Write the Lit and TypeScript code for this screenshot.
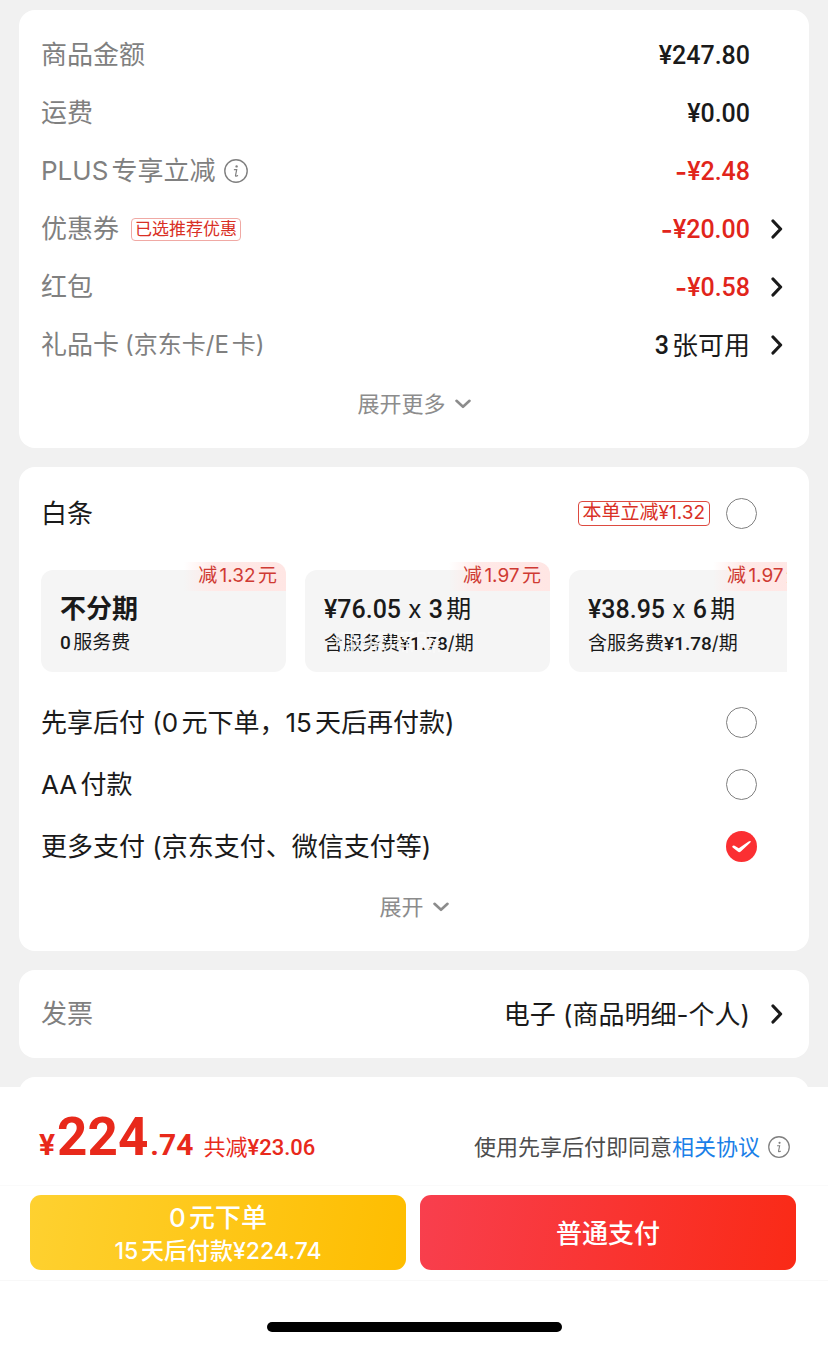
import { LitElement, html, css, svg, nothing } from "lit";
import { customElement, state } from "lit/decorators.js";

interface PriceRow {
  label: string;
  note?: string;
  tag?: string;
  info?: boolean;
  value: string;
  unit?: string;
  discount?: boolean;
  link?: boolean;
}

interface Plan {
  amount?: string;
  times: string;
  feeAmount: string;
  feeBefore?: string;
  feeAfter: string;
  badge: string;
  smudge?: boolean;
}

const PRICE_ROWS: PriceRow[] = [
  { label: "商品金额", value: "¥247.80" },
  { label: "运费", value: "¥0.00" },
  { label: "PLUS专享立减", info: true, value: "¥2.48", discount: true },
  { label: "优惠券", tag: "已选推荐优惠", value: "¥20.00", discount: true, link: true },
  { label: "红包", value: "¥0.58", discount: true, link: true },
  { label: "礼品卡", note: "(京东卡/E卡)", value: "3", unit: "张可用", link: true },
];

const PLANS: Plan[] = [
  { times: "不分期", feeAmount: "0", feeAfter: "服务费", badge: "减1.32元" },
  { amount: "¥76.05", times: "3", feeBefore: "含服务费", feeAmount: "¥1.78", feeAfter: "/期", badge: "减1.97元", smudge: true },
  { amount: "¥38.95", times: "6", feeBefore: "含服务费", feeAmount: "¥1.78", feeAfter: "/期", badge: "减1.97元" },
];

const METHODS = [
  { id: "later", label: "先享后付 (0元下单，15天后再付款)" },
  { id: "aa", label: "AA付款" },
  { id: "more", label: "更多支付 (京东支付、微信支付等)" },
];

const chevronRight = html`<svg class="chev-right" viewBox="0 0 12 20" aria-hidden="true">
  ${svg`<path d="M2 2 L9.6 10 L2 18" fill="none" stroke="currentColor" stroke-width="3.2" stroke-linecap="round" stroke-linejoin="round"/>`}
</svg>`;

const chevronDown = html`<svg class="chev-down" viewBox="0 0 16 10" aria-hidden="true">
  ${svg`<path d="M1.5 1.8 L8 7.8 L14.5 1.8" fill="none" stroke="currentColor" stroke-width="2.6" stroke-linecap="round" stroke-linejoin="round"/>`}
</svg>`;

const infoIcon = html`<svg class="info-icon" viewBox="0 0 24 24" aria-hidden="true">
  ${svg`<circle cx="12" cy="12" r="11.2" fill="none" stroke="currentColor" stroke-width="1.4"/>
  <circle cx="12.6" cy="7.4" r="1.2" fill="currentColor"/>
  <path d="M10.4 10.7 H12.7 L11.5 16.6 Q11.4 17.3 12.1 17.2 L13.6 16.6" fill="none" stroke="currentColor" stroke-width="1.2" stroke-linecap="round"/>`}
</svg>`;

// Broken white strokes of a faded stamp lying over the fee line.
const smudge = html`<svg class="smudge" viewBox="0 0 108 24" aria-hidden="true">
  ${[0, 27, 54, 81].map(
    (x) => svg`<path transform="translate(${x} 0)" d="M2 3 V20 M2 3 H9 M9 3 V19 M3 9 H8 M3 15 H8 M12 3 H25 M18 1 V7 M13 8 L24 12 M24 7 L13 13 M12 16 H25 M18 12 V23 M14 18 V22 M23 18 V22"
      fill="none" stroke="#fafafa" stroke-width="1.4"/>`,
  )}
</svg>`;

@customElement("app-root")
export class AppRoot extends LitElement {
  static styles = css`
    :host {
      display: flex;
      flex-direction: column;
      height: 100vh;
      background: #f1f1f1;
      color: #1a1a1a;
      font-family: Inter, "Noto Sans CJK SC", sans-serif;
      font-size: 26px;
      line-height: 36px;
      text-autospace: normal;
    }
    * {
      box-sizing: border-box;
    }
    button {
      font: inherit;
      color: inherit;
      border: 0;
      padding: 0;
      background: none;
      cursor: pointer;
      text-autospace: inherit;
    }
    .scroll {
      flex: 1;
      min-height: 0;
      overflow-y: auto;
      scrollbar-width: none;
      display: flex;
      flex-direction: column;
      gap: 19px;
      padding: 10px 19px 0;
    }
    .card {
      flex: none;
      background: #fff;
      border-radius: 16px;
      padding: 15px 22px 14px;
    }
    .card-prices {
      padding-top: 16px;
    }
    .card-invoice {
      padding-bottom: 15px;
    }
    .card-next {
      min-height: 80px;
    }
    .num {
      font-family: Roboto, "Noto Sans CJK SC", sans-serif;
      font-weight: 500;
    }
    .row {
      display: grid;
      grid-template-columns: auto 1fr 37px;
      align-items: center;
      width: 100%;
      height: 58px;
      text-align: left;
    }
    .label {
      display: flex;
      align-items: center;
      color: #808080;
    }
    .note {
      font-size: 24px;
      margin-left: 6px;
    }
    .tag {
      display: flex;
      align-items: center;
      height: 23px;
      margin-left: 12px;
      padding: 0 3px;
      border: 1px solid #f0a9a4;
      border-radius: 4px;
      color: #d93025;
      font-size: 17px;
      line-height: 20px;
    }
    .tag-strong {
      height: 25px;
      padding: 0 4px;
      border-color: #dd4a40;
      font-size: 19px;
    }
    .info-icon {
      width: 24px;
      height: 24px;
      margin-left: 8px;
    }
    .value {
      display: flex;
      justify-content: flex-end;
      align-items: center;
      padding-top: 2px;
    }
    .value .num {
      font-size: 25px;
    }
    .discount {
      color: #e1251b;
    }
    .sign {
      font-weight: 600;
    }
    .unit {
      margin-left: 3px;
    }
    .chev-right {
      width: 12px;
      height: 20px;
      justify-self: end;
      margin-right: 4px;
    }
    .expand {
      display: flex;
      justify-content: center;
      align-items: center;
      gap: 9px;
      width: 100%;
      height: 60px;
      color: #8c8c8c;
      font-size: 22px;
    }
    .chev-down {
      width: 16px;
      height: 10px;
    }
    .method {
      display: flex;
      align-items: center;
      height: 62px;
      padding-right: 30px;
      cursor: pointer;
    }
    .method-name {
      flex: 1;
      padding-top: 2px;
    }
    .radio {
      appearance: none;
      flex: none;
      width: 31px;
      height: 31px;
      margin: 0 0 0 16px;
      border: 1px solid #7f7f7f;
      border-radius: 50%;
      background: #fff;
    }
    .radio:checked {
      border: 0;
      background: url('data:image/svg+xml,<svg xmlns="http://www.w3.org/2000/svg" viewBox="0 0 31 31"><path d="M6.2 15.2 Q7.2 14.2 8.6 14.8 L12.8 17.2 L22.6 10.4 Q24.6 9.4 24.9 10.6 Q24.8 11.4 23.6 12.2 L14.8 20.6 Q13.2 21.9 11.8 20.6 L6.6 16.6 Z" fill="white"/></svg>')
        center / 100% no-repeat #fb2f32;
    }
    .plans {
      display: flex;
      gap: 19px;
      margin: 18px 0 19px;
      padding-top: 8px;
      overflow-x: auto;
      overflow-y: hidden;
      scrollbar-width: none;
    }
    .plan {
      position: relative;
      display: flex;
      flex-direction: column;
      align-items: flex-start;
      flex: none;
      width: 245px;
      height: 102px;
      padding: 21px 19px 0;
      border-radius: 12px;
      background: #f5f5f5;
    }
    .plan-title {
      font-size: 25px;
      line-height: 36px;
      white-space: nowrap;
    }
    .plan-title-strong {
      font-size: 26px;
      font-weight: 700;
    }
    .plan-fee {
      font-size: 19px;
      line-height: 32px;
      white-space: nowrap;
    }
    .plan-badge {
      position: absolute;
      top: -8px;
      right: 0;
      height: 29px;
      padding: 0 9px 0 14px;
      border-radius: 0 12px 0 0;
      background: linear-gradient(90deg, #fff0ee00, #ffe9e7 30%, #ffe6e4);
      color: #cf3a33;
      font-size: 19px;
      line-height: 27px;
    }
    .smudge {
      position: absolute;
      top: 60px;
      left: 30px;
      width: 108px;
      height: 24px;
    }
    .footer {
      flex: none;
      background: #fff;
    }
    .summary {
      display: flex;
      justify-content: space-between;
      align-items: baseline;
      padding: 17px 38px 0 39px;
      height: 98px;
    }
    .total {
      display: flex;
      align-items: baseline;
      gap: 2px;
      color: #e8291b;
      line-height: 66px;
    }
    .total-main {
      font-size: 53px;
      font-weight: 700;
    }
    .total-minor {
      font-size: 30px;
      font-weight: 700;
    }
    .saved {
      margin-left: 8px;
      font-size: 22px;
    }
    .agree {
      display: flex;
      align-items: center;
      color: #4d4d4d;
      font-size: 22px;
      line-height: 30px;
    }
    .agree a {
      color: #1a7fe8;
      text-decoration: none;
    }
    .agree .info-icon {
      width: 22px;
      height: 22px;
      color: #808080;
    }
    .actions {
      display: grid;
      grid-template-columns: 1fr 1fr;
      gap: 14px;
      padding: 9px 32px 10px 30px;
      border-top: 1px solid #fafafa;
      border-bottom: 1px solid #f8f8f8;
    }
    .action {
      display: flex;
      flex-direction: column;
      align-items: center;
      justify-content: center;
      height: 75px;
      padding-top: 2px;
      border-radius: 11px;
      color: #fff;
      font-weight: 500;
    }
    .action-later {
      background: linear-gradient(100deg, #fed130, #febd00);
      line-height: 34px;
    }
    .action-later small {
      font-size: 23px;
      line-height: 32px;
    }
    .action-pay {
      background: linear-gradient(100deg, #f83f4e, #fa2a16);
    }
    .home {
      display: flex;
      justify-content: center;
      padding: 41px 0 15px;
    }
    .home-bar {
      width: 295px;
      height: 10px;
      border-radius: 5px;
      background: #000;
    }
  `;

  @state() private selected = "more";

  private pick(id: string) {
    this.selected = id;
  }

  private priceRow(r: PriceRow) {
    const body = html`
      <span class="label">
        ${r.label}
        ${r.note ? html`<span class="note">${r.note}</span>` : nothing}
        ${r.tag ? html`<span class="tag">${r.tag}</span>` : nothing}
        ${r.info ? infoIcon : nothing}
      </span>
      <span class="value ${r.discount ? "discount" : ""}">
        ${r.discount ? html`<span class="sign">-</span>` : nothing}<span class="num">${r.value}</span>${r.unit
          ? html`<span class="unit">${r.unit}</span>`
          : nothing}
      </span>
      ${r.link ? chevronRight : nothing}
    `;
    return r.link ? html`<button class="row">${body}</button>` : html`<div class="row">${body}</div>`;
  }

  private plan(p: Plan) {
    return html`<button class="plan">
      ${p.amount
        ? html`<span class="plan-title"><span class="num">${p.amount}</span> x <span class="num">${p.times}</span>期</span>`
        : html`<span class="plan-title plan-title-strong">${p.times}</span>`}
      <span class="plan-fee">${p.feeBefore ?? ""}<span class="num">${p.feeAmount}</span>${p.feeAfter}</span>
      ${p.smudge ? smudge : nothing}
      <span class="plan-badge">${p.badge}</span>
    </button>`;
  }

  private method(id: string, label: string, tag?: string) {
    return html`<label class="method">
      <span class="method-name">${label}</span>
      ${tag ? html`<span class="tag tag-strong">${tag}</span>` : nothing}
      <input class="radio" type="radio" name="pay" .checked=${this.selected === id} @change=${() => this.pick(id)} />
    </label>`;
  }

  render() {
    return html`
      <main class="scroll">
        <section class="card card-prices">
          ${PRICE_ROWS.map((r) => this.priceRow(r))}
          <button class="expand">展开更多${chevronDown}</button>
        </section>
        <section class="card">
          ${this.method("baitiao", "白条", "本单立减¥1.32")}
          <div class="plans">${PLANS.map((p) => this.plan(p))}</div>
          ${METHODS.map((m) => this.method(m.id, m.label))}
          <button class="expand">展开${chevronDown}</button>
        </section>
        <section class="card card-invoice">
          <button class="row">
            <span class="label">发票</span>
            <span class="value">电子 (商品明细-个人)</span>
            ${chevronRight}
          </button>
        </section>
        <section class="card card-next"></section>
      </main>
      <footer class="footer">
        <div class="summary">
          <div class="total">
            <span class="num total-minor">¥</span><span class="num total-main">224</span><span class="num total-minor">.74</span>
            <span class="saved">共减<span class="num">¥23.06</span></span>
          </div>
          <div class="agree">使用先享后付即同意<a href="#agreement">相关协议</a>${infoIcon}</div>
        </div>
        <div class="actions">
          <button class="action action-later">0元下单<small>15天后付款¥224.74</small></button>
          <button class="action action-pay">普通支付</button>
        </div>
        <div class="home"><div class="home-bar"></div></div>
      </footer>
    `;
  }
}
